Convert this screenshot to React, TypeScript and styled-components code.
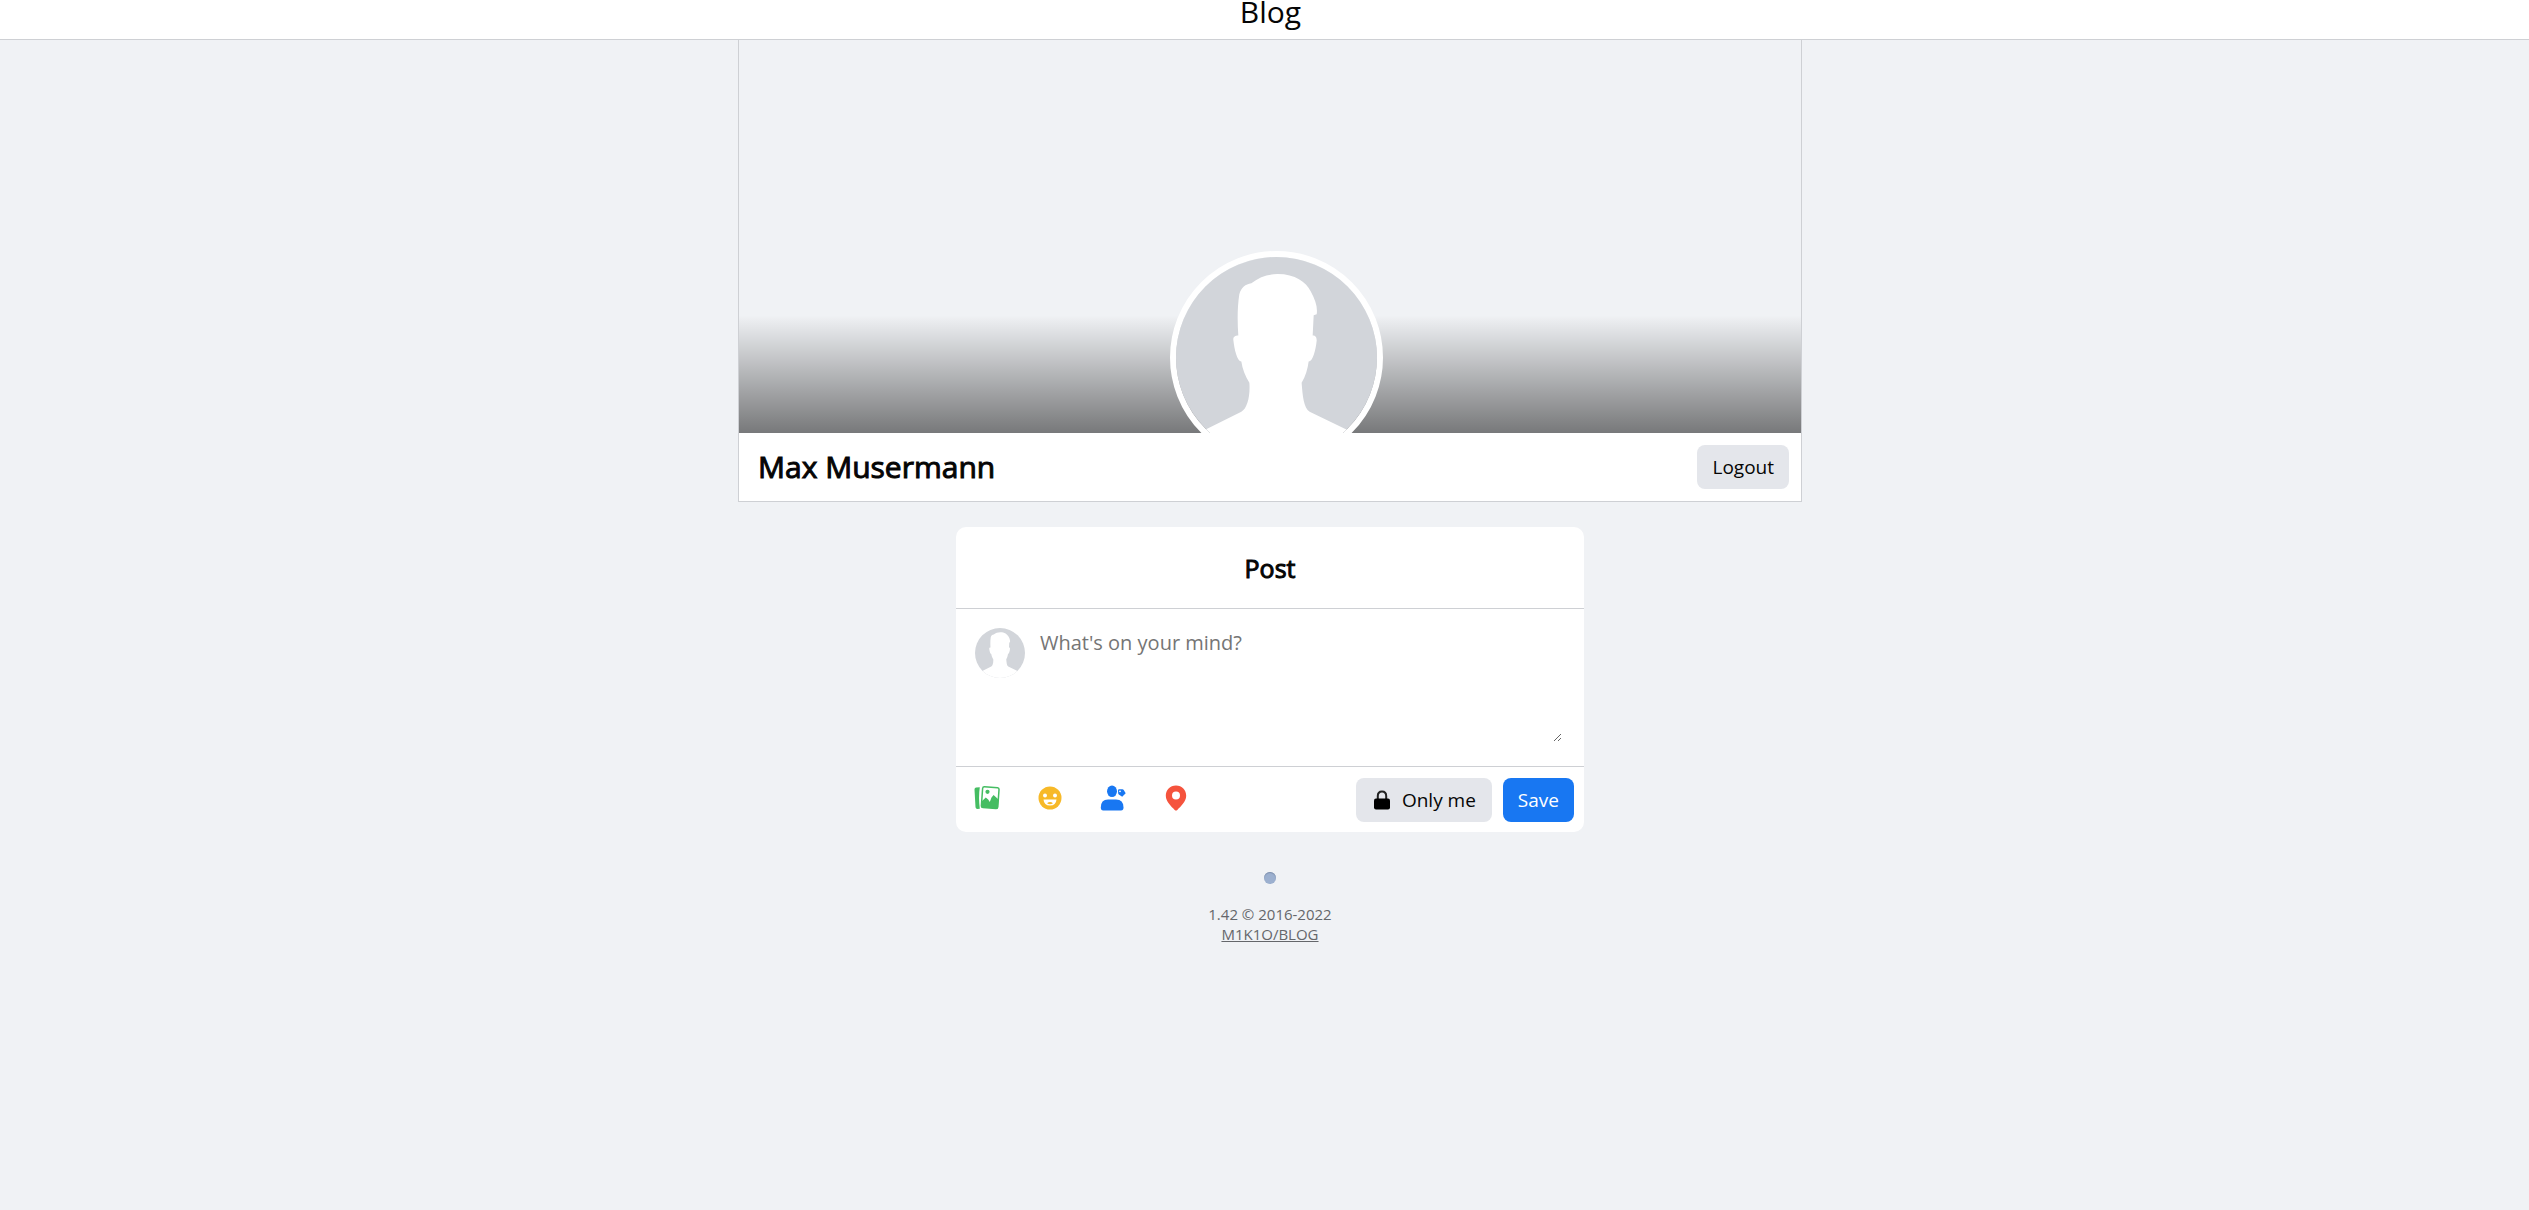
import React from "react";
import styled, { createGlobalStyle } from "styled-components";

const GlobalStyle = createGlobalStyle`
  *, *::before, *::after { box-sizing: border-box; }
  body {
    margin: 0;
    background: #f0f2f5;
    color: #050505;
    font-family: "Open Sans", "Noto Sans", sans-serif;
    font-size: 19px;
    font-weight: 400;
  }
  button, textarea { font: inherit; color: inherit; }
`;

const TopBar = styled.header`
  display: flex;
  align-items: flex-start;
  justify-content: center;
  height: 40px;
  padding-left: 12px;
  background: #fff;
  border-bottom: 1px solid #ced0d4;
`;

const SiteTitle = styled.h1`
  margin: 0;
  font-size: 30px;
  font-weight: 400;
  line-height: 24px;
`;

const Page = styled.main`
  display: flex;
  flex-direction: column;
  align-items: center;
  padding-left: 11px;
`;

const Profile = styled.section`
  width: 100%;
  max-width: 1064px;
  margin-bottom: 25px;
  border: 1px solid #ced0d4;
  border-top: 0;
`;

const Cover = styled.div`
  position: relative;
  height: 393px;
  overflow: hidden;
  background: linear-gradient(to bottom, rgba(0, 0, 0, 0) 70%, rgba(0, 0, 0, 0.5) 100%);
`;

const ProfilePicture = styled.div`
  position: absolute;
  top: 211px;
  left: 50%;
  width: 213px;
  height: 213px;
  margin-left: -100px;
  border: 6px solid #fff;
  border-radius: 50%;
  overflow: hidden;
`;

const ProfileBar = styled.div`
  display: flex;
  align-items: center;
  justify-content: space-between;
  height: 68px;
  padding: 0 12px 0 19px;
  background: #fff;
`;

const Name = styled.h2`
  margin: 0;
  font-size: 30px;
  font-weight: 400;
  line-height: 40px;
  -webkit-text-stroke: 1px currentColor;
`;

const Button = styled.button<{ $primary?: boolean; $wide?: boolean }>`
  display: inline-flex;
  align-items: center;
  gap: 10px;
  height: 44px;
  padding: 0 ${(p) => (p.$wide ? 16 : 15)}px;
  border: 0;
  border-radius: 8px;
  background: ${(p) => (p.$primary ? "#1877f2" : "#e4e6eb")};
  color: ${(p) => (p.$primary ? "#fff" : "#050505")};
  cursor: pointer;
`;

const PostCard = styled.form`
  width: 100%;
  max-width: 628px;
  background: #fff;
  border-radius: 10px;
`;

const PostTitle = styled.h3`
  display: flex;
  align-items: center;
  justify-content: center;
  height: 82px;
  margin: 0;
  border-bottom: 1px solid #ced0d4;
  font-size: 25px;
  font-weight: 400;
  -webkit-text-stroke: 1px currentColor;
`;

const PostBody = styled.div`
  display: flex;
  align-items: flex-start;
  gap: 8px;
  padding: 19px 22px 24px 19px;
`;

const SmallPicture = styled.div`
  flex: none;
  width: 50px;
  height: 50px;
  border-radius: 50%;
  overflow: hidden;
`;

const PostText = styled.textarea`
  flex: 1;
  min-width: 0;
  height: 114px;
  padding: 2px 7px;
  border: 0;
  outline: 0;
  resize: vertical;
  background: transparent;
  font-size: 20px;
  line-height: 26px;
  &::placeholder { color: #757575; opacity: 1; }
`;

const PostFooter = styled.div`
  display: flex;
  align-items: center;
  justify-content: space-between;
  height: 66px;
  padding: 0 10px 0 0;
  border-top: 1px solid #ced0d4;
`;

const Group = styled.div<{ $gap: number }>`
  display: flex;
  align-items: center;
  gap: ${(p) => p.$gap}px;
`;

const IconButton = styled.button`
  display: flex;
  align-items: center;
  justify-content: center;
  width: 63px;
  height: 44px;
  padding: 0 1px 3px 0;
  border: 0;
  background: none;
  cursor: pointer;
`;

const Loader = styled.div`
  width: 12px;
  height: 12px;
  margin: 40px 0 20px;
  border-radius: 50%;
  background: #9cb0cf;
  box-shadow: inset 0 1px 1px #7f90ad;
`;

const Footer = styled.footer`
  color: #65676b;
  font-size: 15px;
  line-height: 20px;
  text-align: center;
`;

const FooterLink = styled.a`
  display: block;
  color: inherit;
`;

const Silhouette = () => (
  <svg viewBox="0 0 200 200" width="100%" height="100%" aria-hidden="true">
    <rect width="200" height="200" fill="#d2d5da" />
    <path
      fill="#fff"
      d="M0 200V184L31 171L65 154C71 151 74 138 73 125C69 119 66 111 65 104C61 104 58 92 57 82C57 79 59 78 62 78C61 64 61 50 63 37C65 30 69 27 75 26C83 20 91 17 101 17C119 17 129 25 134 34C139 43 141 50 140 57L137 58L136 78C139 78 140 80 140 83C139 93 136 104 132 104C131 111 129 119 125 125C126 138 127 150 133 154L168 171L200 184V200Z"
    />
  </svg>
);

const PhotoIcon = () => (
  <svg width="26" height="26" viewBox="0 0 26 26" aria-hidden="true">
    <path fill="#45bd62" d="M.5 4.500Q.5 2.800 2.200 2.600L5.800 2.200Q4.300 12 5.800 23.800L3.300 24Q1.800 24 1.500 22.200Z" />
    <path fill="none" stroke="#45bd62" strokeWidth="1.500" d="M10.500 1.800L23.600 2.800Q25.200 3 25 4.700L23.800 21.800Q23.600 23.500 22 23.400L9 22.600Q7.300 22.400 7.400 20.700L8.600 3.500Q8.800 1.700 10.500 1.800Z" />
    <circle cx="13.500" cy="6.800" r="2.100" fill="#45bd62" />
    <path fill="#45bd62" d="M8 16L11.800 12.600L14.200 14.500L15.800 17L17.500 12.500L19.600 10L24.500 14.500L23.800 23.400L8 22.500Z" />
  </svg>
);

const SmileIcon = () => (
  <svg width="26" height="26" viewBox="0 0 26 26" aria-hidden="true">
    <circle cx="13" cy="13" r="11.500" fill="#f7b928" />
    <circle cx="8" cy="10.500" r="2" fill="#fff" />
    <circle cx="18" cy="10.500" r="2" fill="#fff" />
    <path fill="#fff" d="M6.500 14.500H19.500Q19 20.500 13 20.500Q7 20.500 6.500 14.500Z" />
    <path fill="#f7b928" d="M10 18.300Q13 15.800 16 18.300Q13 20 10 18.300Z" />
  </svg>
);

const PersonIcon = () => (
  <svg width="26" height="26" viewBox="0 0 26 26" aria-hidden="true">
    <ellipse cx="12" cy="6.300" rx="5" ry="5.800" fill="#1877f2" />
    <path fill="#1877f2" d="M.8 22.500Q.8 14.500 8 14.500H16Q23.500 14.500 23.500 22.500Q23.500 25.500 21 25.500H3.200Q.8 25.500 .8 22.500Z" />
    <path fill="#1877f2" d="M18 5.500Q18 4.300 19.200 4.300H22.500Q23.300 4.300 23.700 5L25.700 8.200L22.200 11.700L18.800 9.500Q18.300 9.200 18.200 8.500Z" />
    <circle cx="20" cy="6.300" r=".9" fill="#fff" />
  </svg>
);

const PinIcon = () => (
  <svg width="26" height="26" viewBox="0 0 26 26" aria-hidden="true">
    <path
      fill="#f5533d"
      fillRule="evenodd"
      d="M13 .5C19 .5 23.200 5 23.200 10.800C23.200 17 17.500 21.500 14.300 25Q13 26.200 11.700 25C8.500 21.500 2.800 17 2.800 10.800C2.800 5 7 .5 13 .5ZM13 6.500A4 4 0 1 0 13 14.500A4 4 0 1 0 13 6.500Z"
    />
  </svg>
);

const LockIcon = () => (
  <svg width="20" height="20" viewBox="0 0 20 20" aria-hidden="true">
    <path fill="none" stroke="#222" strokeWidth="2" d="M5.800 10V6Q5.800 1.500 10 1.500Q14.200 1.500 14.200 6V10" />
    <rect x="2" y="8.500" width="16" height="11" rx="2" fill="#000" />
  </svg>
);

const tools = [
  { label: "Add photo", Icon: PhotoIcon },
  { label: "Add feeling", Icon: SmileIcon },
  { label: "Tag people", Icon: PersonIcon },
  { label: "Add location", Icon: PinIcon },
];

export default function App() {
  return (
    <>
      <GlobalStyle />
      <TopBar>
        <SiteTitle>Blog</SiteTitle>
      </TopBar>
      <Page>
        <Profile>
          <Cover>
            <ProfilePicture>
              <Silhouette />
            </ProfilePicture>
          </Cover>
          <ProfileBar>
            <Name>Max Musermann</Name>
            <Button type="button">Logout</Button>
          </ProfileBar>
        </Profile>
        <PostCard onSubmit={(e) => e.preventDefault()}>
          <PostTitle>Post</PostTitle>
          <PostBody>
            <SmallPicture>
              <Silhouette />
            </SmallPicture>
            <PostText aria-label="Post text" placeholder="What's on your mind?" />
          </PostBody>
          <PostFooter>
            <Group $gap={0}>
              {tools.map(({ label, Icon }) => (
                <IconButton key={label} type="button" aria-label={label}>
                  <Icon />
                </IconButton>
              ))}
            </Group>
            <Group $gap={11}>
              <Button type="button" $wide>
                <LockIcon />
                Only me
              </Button>
              <Button type="submit" $primary>
                Save
              </Button>
            </Group>
          </PostFooter>
        </PostCard>
        <Loader />
        <Footer>
          1.42 © 2016-2022
          <FooterLink href="#">M1K1O/BLOG</FooterLink>
        </Footer>
      </Page>
    </>
  );
}
